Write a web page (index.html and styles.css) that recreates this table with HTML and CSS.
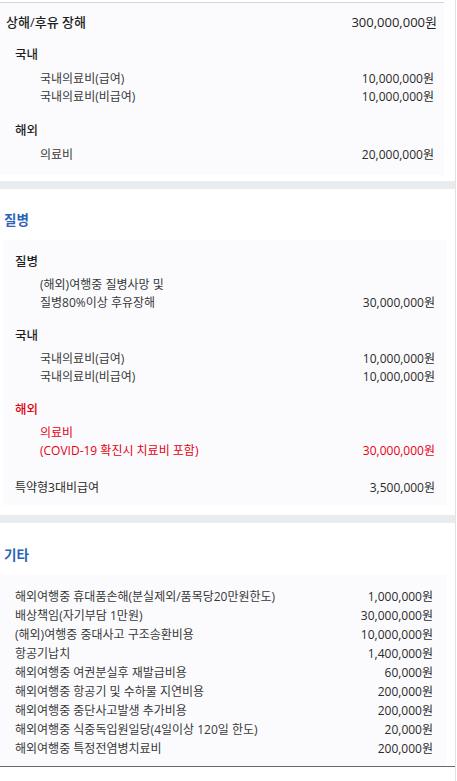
FILE: index.html
```html
<!DOCTYPE html>
<html lang="ko">
<head>
<meta charset="utf-8">
<link rel="stylesheet" href="styles.css">
</head>
<body>
<div class="page">
  <div class="panel panel-top">
    <div class="row head-row"><span class="title">상해/후유 장해</span><span class="amt-lg">300,000,000원</span></div>
    <div class="group">
      <div class="ghead">국내</div>
      <ul class="items">
        <li class="row"><span class="lbl">국내의료비(급여)</span><span class="amt">10,000,000원</span></li>
        <li class="row"><span class="lbl">국내의료비(비급여)</span><span class="amt">10,000,000원</span></li>
      </ul>
    </div>
    <div class="group">
      <div class="ghead">해외</div>
      <ul class="items">
        <li class="row"><span class="lbl">의료비</span><span class="amt">20,000,000원</span></li>
      </ul>
    </div>
  </div>

  <div class="bar"></div>

  <h2 class="sec-title">질병</h2>
  <div class="panel panel-mid">
    <div class="group">
      <div class="ghead">질병</div>
      <ul class="items">
        <li class="row"><span class="lbl">(해외)여행중 질병사망 및<br>질병80%이상 후유장해</span><span class="amt">30,000,000원</span></li>
      </ul>
    </div>
    <div class="group">
      <div class="ghead">국내</div>
      <ul class="items">
        <li class="row"><span class="lbl">국내의료비(급여)</span><span class="amt">10,000,000원</span></li>
        <li class="row"><span class="lbl">국내의료비(비급여)</span><span class="amt">10,000,000원</span></li>
      </ul>
    </div>
    <div class="group red">
      <div class="ghead">해외</div>
      <ul class="items">
        <li class="row"><span class="lbl">의료비<br>(COVID-19 확진시 치료비 포함)</span><span class="amt">30,000,000원</span></li>
      </ul>
    </div>
    <div class="group solo">
      <div class="row"><span class="ghead">특약형3대비급여</span><span class="amt">3,500,000원</span></div>
    </div>
  </div>

  <div class="bar bar2"></div>

  <h2 class="sec-title sec-etc">기타</h2>
  <div class="panel panel-last">
    <ul class="items etc">
      <li class="row"><span class="lbl">해외여행중 휴대품손해(분실제외/품목당20만원한도)</span><span class="amt">1,000,000원</span></li>
      <li class="row"><span class="lbl">배상책임(자기부담 1만원)</span><span class="amt">30,000,000원</span></li>
      <li class="row"><span class="lbl">(해외)여행중 중대사고 구조송환비용</span><span class="amt">10,000,000원</span></li>
      <li class="row"><span class="lbl">항공기납치</span><span class="amt">1,400,000원</span></li>
      <li class="row"><span class="lbl">해외여행중 여권분실후 재발급비용</span><span class="amt">60,000원</span></li>
      <li class="row"><span class="lbl">해외여행중 항공기 및 수하물 지연비용</span><span class="amt">200,000원</span></li>
      <li class="row"><span class="lbl">해외여행중 중단사고발생 추가비용</span><span class="amt">200,000원</span></li>
      <li class="row"><span class="lbl">해외여행중 식중독입원일당(4일이상 120일 한도)</span><span class="amt">20,000원</span></li>
      <li class="row"><span class="lbl">해외여행중 특정전염병치료비</span><span class="amt">200,000원</span></li>
    </ul>
  </div>
</div>
</body>
</html>
```

FILE: styles.css
```css
* { box-sizing: border-box; }
html, body { margin: 0; padding: 0; background: #fff; }
body {
  font-family: "Open Sans", "Noto Sans CJK KR", sans-serif;
  color: #333;
}
.page {
  width: 456px;
  border-right: 1px solid #e2e2e2;
  padding-top: 2px;
  padding-bottom: 14px;
}
.panel {
  background: #fbfbfd;
  width: 444px;
  margin-left: 3px;
  padding: 12px 12px 7px 12px;
}
.panel-top {
  margin-left: 0;
  border-top: 1px solid #d6d6d9;
  padding: 9px 7px 11px 6px;
}
.row {
  display: flex;
  justify-content: space-between;
  align-items: flex-end;
}
.head-row {
  line-height: 20px;
  margin-bottom: 13px;
}
.title {
  font-size: 13px;
  font-weight: 500;
  color: #1e1e1e;
}
.amt-lg {
  font-size: 13px;
  color: #1e1e1e;
}
.panel-top .group { padding-left: 9px; padding-right: 3px; }
.group + .group { margin-top: 15px; }
.panel-mid .group + .group { margin-top: 14px; }
.ghead {
  font-size: 12.5px;
  line-height: 20px;
  color: #1e1e1e;
  font-weight: 500;
}
.items {
  list-style: none;
  margin: 5px 0 0 0;
  padding: 0 0 0 25px;
}
.panel-mid .items { margin-top: 4px; }
.items .row { line-height: 18px; }
.lbl {
  font-size: 12px;
  color: #383838;
}
.amt {
  font-size: 12px;
  color: #2a2a2a;
}
.group.red .ghead,
.group.red .lbl,
.group.red .amt { color: #e60012; }
.panel-mid .group.solo { margin-top: 18px; }
.group.solo .row { line-height: 20px; }
.group.solo .ghead { font-weight: 400; color: #2a2a2a; font-size: 12px; }
.bar {
  height: 8px;
  background: #e9ecef;
  margin-top: 6px;
}
.bar2 { margin-top: 10px; }
.sec-title {
  margin: 0;
  padding: 20px 0 0 4px;
  font-size: 13.5px;
  line-height: 22px;
  font-weight: 700;
  color: #2a64b8;
  margin-bottom: 9px;
}
.sec-etc { padding-top: 21px; }
.panel-last {
  padding-top: 12px;
  padding-bottom: 8px;
  border-bottom: 1px solid #6a6a6a;
  width: 455px;
  margin-left: 0;
  background: linear-gradient(to right, #fbfbfd 447px, #fff 447px);
  padding-left: 15px;
  padding-right: 22px;
}
.items.etc { padding-left: 0; margin-top: 0; }
.items.etc .row { line-height: 19px; }
```
